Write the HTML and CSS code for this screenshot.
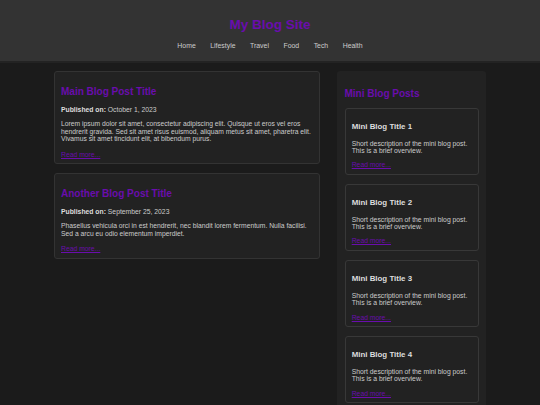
FILE: index.html
```html
<!DOCTYPE html>
<html lang="en">
<head>
<meta charset="utf-8">
<title>My Blog Site</title>
<link rel="stylesheet" href="styles.css">
</head>
<body>
<header class="site-header">
  <h1 class="site-title">My Blog Site</h1>
  <nav class="site-nav">
    <a href="#">Home</a>
    <a href="#">Lifestyle</a>
    <a href="#">Travel</a>
    <a href="#">Food</a>
    <a href="#">Tech</a>
    <a href="#">Health</a>
  </nav>
</header>
<div class="container">
  <main class="posts">
    <article class="post">
      <h2 class="post-title">Main Blog Post Title</h2>
      <p class="meta"><strong>Published on:</strong> October 1, 2023</p>
      <p class="post-body">Lorem ipsum dolor sit amet, consectetur adipiscing elit. Quisque ut eros vel eros hendrerit gravida. Sed sit amet risus euismod, aliquam metus sit amet, pharetra elit. Vivamus sit amet tincidunt elit, at bibendum purus.</p>
      <a class="more" href="#">Read more...</a>
    </article>
    <article class="post">
      <h2 class="post-title">Another Blog Post Title</h2>
      <p class="meta"><strong>Published on:</strong> September 25, 2023</p>
      <p class="post-body">Phasellus vehicula orci in est hendrerit, nec blandit lorem fermentum. Nulla facilisi. Sed a arcu eu odio elementum imperdiet.</p>
      <a class="more" href="#">Read more...</a>
    </article>
  </main>
  <aside class="sidebar">
    <h2 class="sidebar-title">Mini Blog Posts</h2>
    <div class="mini">
      <h3 class="mini-title">Mini Blog Title 1</h3>
      <p class="mini-body">Short description of the mini blog post. This is a brief overview.</p>
      <a class="more mini-more" href="#">Read more...</a>
    </div>
    <div class="mini">
      <h3 class="mini-title">Mini Blog Title 2</h3>
      <p class="mini-body">Short description of the mini blog post. This is a brief overview.</p>
      <a class="more mini-more" href="#">Read more...</a>
    </div>
    <div class="mini">
      <h3 class="mini-title">Mini Blog Title 3</h3>
      <p class="mini-body">Short description of the mini blog post. This is a brief overview.</p>
      <a class="more mini-more" href="#">Read more...</a>
    </div>
    <div class="mini">
      <h3 class="mini-title">Mini Blog Title 4</h3>
      <p class="mini-body">Short description of the mini blog post. This is a brief overview.</p>
      <a class="more mini-more" href="#">Read more...</a>
    </div>
  </aside>
</div>
</body>
</html>
```
FILE: styles.css
```css
html, body {
  margin: 0;
  padding: 0;
}
body {
  background: #1b1b1b;
  color: #cccccc;
  font-family: "Liberation Sans", Arial, sans-serif;
  font-size: 6.8px;
  line-height: 7.4px;
}
.site-header {
  background: #333333;
  height: 63px;
  box-sizing: border-box;
  padding-top: 16.9px;
  border-bottom: 2px solid #232323;
  text-align: center;
}
.site-title {
  margin: 0 0 9.25px;
  font-size: 13.5px;
  line-height: 15.5px;
  font-weight: bold;
  color: #6a0dad;
}
.site-nav {
  display: flex;
  justify-content: center;
  gap: 14.5px;
  line-height: 8px;
  font-size: 6.9px;
}
.site-nav a {
  color: #cccccc;
  text-decoration: none;
}
.container {
  width: 432px;
  margin: 8px auto 0;
  display: grid;
  grid-template-columns: 1fr 149px;
  column-gap: 17.5px;
  align-items: start;
}
.post {
  background: #222222;
  border: 1px solid #333333;
  border-radius: 3px;
  padding: 5px 5px 5px 6px;
  margin-bottom: 9px;
}
.post-title, .sidebar-title {
  font-size: 10px;
  line-height: 11.5px;
  font-weight: bold;
  color: #6a0dad;
  margin: 8.8px 0 8.4px;
}
.meta {
  margin: 0 0 7px;
  line-height: 7.5px;
}
.meta strong {
  color: #dddddd;
}
.post-body {
  margin: 0 0 8.2px;
  font-size: 6.75px;
}
.more {
  display: block;
  color: #6a0dad;
  text-decoration: underline;
  width: max-content;
}
.sidebar {
  background: #222222;
  border-radius: 3px;
  padding: 8.8px 7.5px 8px;
}
.sidebar-title {
  margin: 8.3px 0 8.4px;
}
.mini {
  border: 1px solid #383838;
  border-radius: 3px;
  padding: 5px 6.2px;
  margin-bottom: 9.2px;
}
.mini-title {
  font-size: 7.9px;
  line-height: 9px;
  font-weight: bold;
  color: #dddddd;
  margin: 8px 0 8.8px;
}
.mini-body {
  margin: 0 0 6.85px;
}
```
